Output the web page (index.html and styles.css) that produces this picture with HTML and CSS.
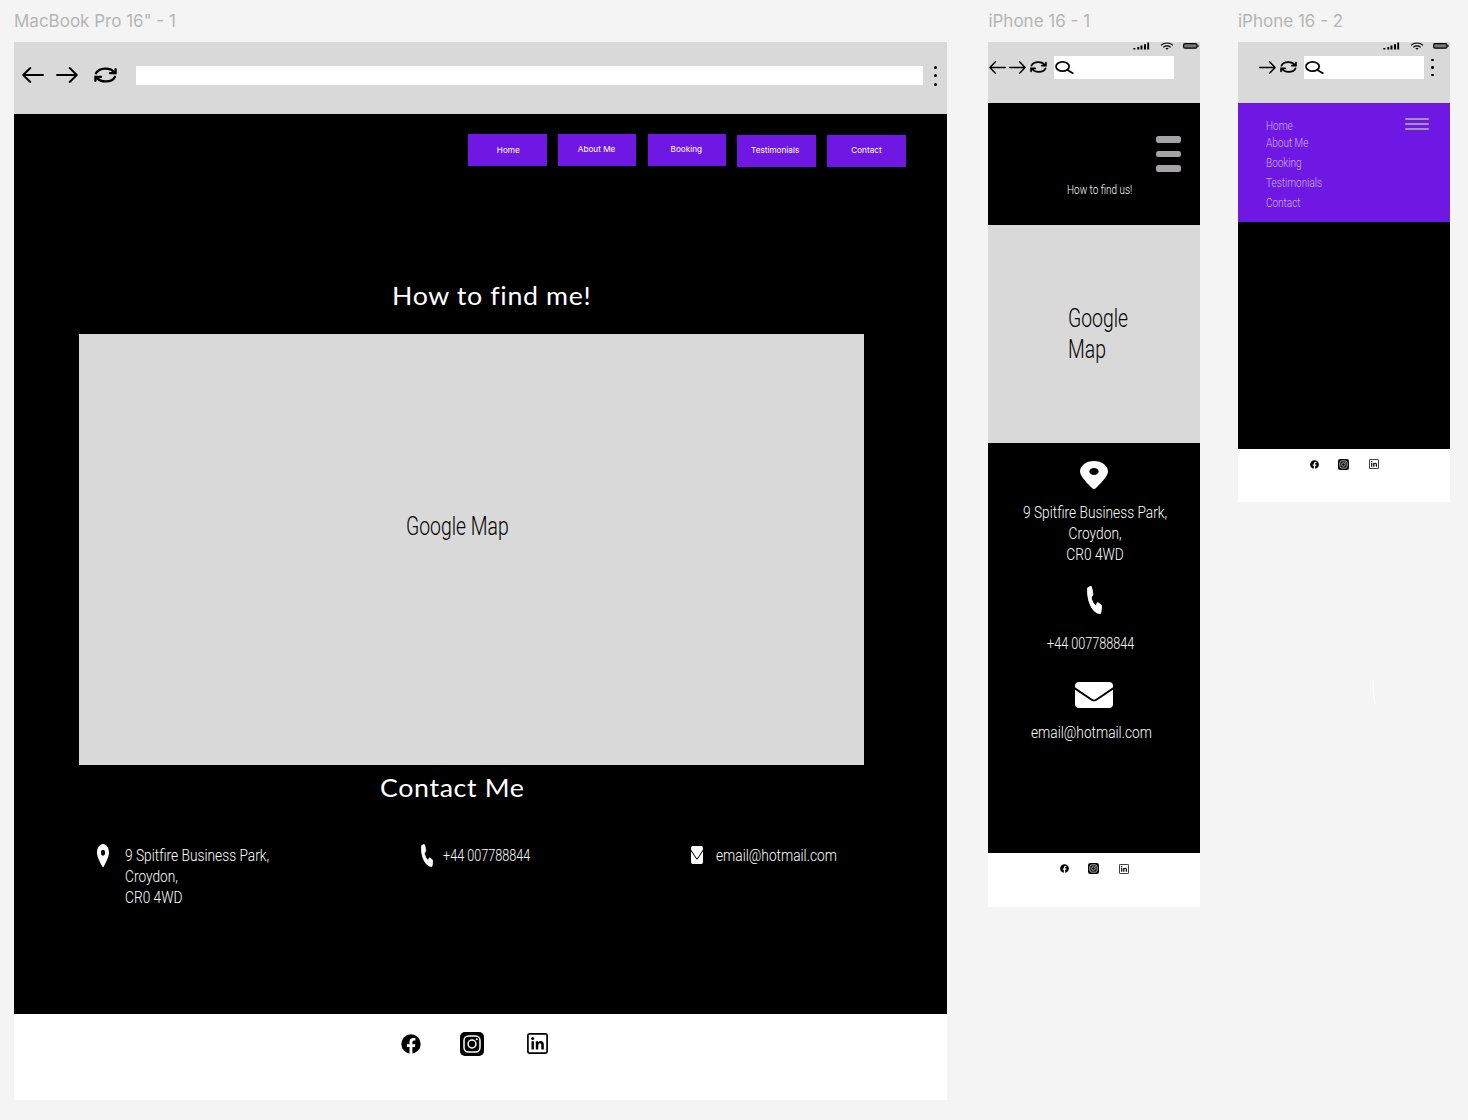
FILE: index.html
```html
<!DOCTYPE html>
<html lang="en">
<head>
<meta charset="utf-8">
<title>Contact page wireframes</title>
<link rel="stylesheet" href="styles.css">
</head>
<body>
<svg class="defs" aria-hidden="true">
  <symbol id="back" viewBox="0 0 22 16" preserveAspectRatio="none"><path d="M21 8H1.2M8.3 1 1.2 8l7.1 7" fill="none" stroke="#000" stroke-width="1.9" stroke-linecap="round" stroke-linejoin="round"/></symbol>
  <symbol id="forward" viewBox="0 0 22 16" preserveAspectRatio="none"><path d="M1 8h19.8M13.7 1l7.1 7-7.1 7" fill="none" stroke="#000" stroke-width="1.9" stroke-linecap="round" stroke-linejoin="round"/></symbol>
  <symbol id="reload" viewBox="0 0 23 16" preserveAspectRatio="none"><path d="M2 6.3C5 .2 16.5 0 20.3 5.5M21.6 2.2v3.900h-5.600M21 9.700C18 15.800 6.500 16 2.700 10.500M1.400 13.800V9.900h5.600" fill="none" stroke="#000" stroke-width="2.300" stroke-linecap="round" stroke-linejoin="miter"/></symbol>
  <symbol id="search" viewBox="0 0 19 13" preserveAspectRatio="none"><ellipse cx="7.600" cy="5.500" rx="6.600" ry="4.600" fill="none" stroke="#000" stroke-width="1.700"/><path d="m12.500 9 5.300 3.200" stroke="#000" stroke-width="1.700" stroke-linecap="round"/></symbol>
  <symbol id="signal" viewBox="0 0 17 8"><path d="M.3 6h2v1.500h-2zM4.300 5h2v2.500h-2zM7.500 3.600h2v3.900h-2zM11 2.200h2v5.300h-2zM14.300.5h1.800v7h-1.800z"/></symbol>
  <symbol id="wifi" viewBox="0 0 14 8"><path d="M1 3.200Q7-1.200 13 3.200M3.300 5.200q3.700-2.700 7.400 0" fill="none" stroke="#000" stroke-width="1.100"/><path d="M5.300 6.200Q7 5.200 8.700 6.200L7 7.700z"/></symbol>
  <symbol id="battery" viewBox="0 0 16 6"><rect x=".6" y=".7" width="13.400" height="4.500" rx="1.500" fill="#777" stroke="#000" stroke-width="1.200"/><path d="M14.500 1.800h1v2.300h-1z"/></symbol>
  <symbol id="pin" viewBox="0 0 384 512" preserveAspectRatio="none"><path fill="#fff" d="M215.700 499.200C267 435 384 279.400 384 192C384 86 298 0 192 0S0 86 0 192c0 87.400 117 243 168.300 307.200c12.300 15.300 35.100 15.300 47.400 0zM192 128a64 64 0 1 1 0 128 64 64 0 1 1 0-128z"/></symbol>
  <symbol id="phone" viewBox="0 0 512 512" preserveAspectRatio="none"><path fill="#fff" stroke="#fff" stroke-width="22" stroke-linejoin="round" d="M160 28c-7.700-18.600-24-22-43-17l-88 24C16 38 11 50 11 64C11 305 206 501 448 501c14 0 27-9 30-22l22-88c5-16-4-34-19-40l-96-40c-16-6.800-35-2-46 11.600L304.700 368C234.300 344 167 270 144 207.300L190 167c13.700-11.200 15-30 9-46z"/></symbol>
  <symbol id="mail" viewBox="0 0 38 26" preserveAspectRatio="none"><path fill="#fff" d="M4 0h30q4 0 4 4v1.200L20.800 17q-1.800 1-3.600 0L0 5.200V4q0-4 4-4zM0 7.700l16.600 11q2.400 1.300 4.800 0L38 7.700V22q0 4-4 4H4q-4 0-4-4z"/></symbol>
  <symbol id="facebook" viewBox="0 0 20 20"><circle cx="10" cy="10" r="9.700"/><path fill="#fff" d="M8.500 20v-7H6v-2.800h2.500V8q0-4 3.800-4h2.100v2.500H13q-1.600 0-1.600 1.600v2.100h2.900l-.5 2.800h-2.400v7z"/></symbol>
  <symbol id="instagram" viewBox="0 0 24 24"><rect width="24" height="24" rx="5"/><g fill="none" stroke="#fff" stroke-width="1.500"><rect x="4" y="4" width="16" height="16" rx="4.500"/><circle cx="12" cy="12" r="3.900"/></g><circle cx="16.800" cy="7.200" r="1" fill="#fff"/></symbol>
  <symbol id="linkedin" viewBox="0 0 21 21"><rect x=".9" y=".9" width="19.200" height="19.200" rx="1.500" fill="none" stroke="#000" stroke-width="1.700"/><circle cx="5.700" cy="5.600" r="1.500"/><path d="M4.500 8.300h2.400v8.200H4.500zM8.800 8.300h2.300v1.200q.9-1.400 2.600-1.400 3.100 0 3.100 3.600v4.800h-2.500V12q0-1.800-1.300-1.800-1.700 0-1.700 2v4.300H8.800z"/></symbol>
</svg>

<main class="canvas">
  <section class="artboard desktop">
    <h2 class="label">MacBook Pro 16" - 1</h2>
    <header class="browser">
      <svg class="arrow"><use href="#back"/></svg>
      <svg class="arrow next"><use href="#forward"/></svg>
      <svg class="reload"><use href="#reload"/></svg>
      <div class="address"></div>
      <div class="dots"><i></i><i></i><i></i></div>
    </header>
    <div class="page">
      <nav class="nav">
        <a>Home</a><a class="up">About Me</a><a class="up">Booking</a><a class="low">Testimonials</a><a class="low">Contact</a>
      </nav>
      <h1 class="title"><span>How to find me!</span></h1>
      <div class="map"><span class="thin narrow">Google Map</span></div>
      <h1 class="title contact-title"><span>Contact Me</span></h1>
      <div class="contacts">
        <svg class="pin"><use href="#pin"/></svg>
        <address><span class="thin wide">9 Spitfire Business Park,<br>Croydon,<br>CR0 4WD</span></address>
        <svg class="phone"><use href="#phone"/></svg>
        <p class="tel"><span class="thin narrow">+44 007788844</span></p>
        <svg class="mail"><use href="#mail"/></svg>
        <p><span class="thin wide">email@hotmail.com</span></p>
      </div>
    </div>
    <footer class="social">
      <svg class="fb"><use href="#facebook"/></svg>
      <svg class="ig"><use href="#instagram"/></svg>
      <svg class="li"><use href="#linkedin"/></svg>
    </footer>
  </section>

  <section class="artboard mobile">
    <h2 class="label">iPhone 16 - 1</h2>
    <header class="phone-bar">
      <div class="status"><svg class="sig"><use href="#signal"/></svg><svg class="wifi"><use href="#wifi"/></svg><svg class="bat"><use href="#battery"/></svg></div>
      <div class="tools">
        <svg class="arrow"><use href="#back"/></svg>
        <svg class="arrow next"><use href="#forward"/></svg>
        <svg class="reload"><use href="#reload"/></svg>
        <div class="address"><svg><use href="#search"/></svg></div>
      </div>
    </header>
    <div class="intro">
      <div class="burger"><i></i><i></i><i></i></div>
      <p><span class="thin narrow">How to find us!</span></p>
    </div>
    <div class="map"><span class="thin narrow">Google<br>Map</span></div>
    <div class="details">
      <svg class="pin"><use href="#pin"/></svg>
      <address><span class="thin wide">9 Spitfire Business Park,<br>Croydon,<br>CR0 4WD</span></address>
      <svg class="phone"><use href="#phone"/></svg>
      <p class="tel"><span class="thin narrow">+44 007788844</span></p>
      <svg class="mail"><use href="#mail"/></svg>
      <p class="email"><span class="thin wide">email@hotmail.com</span></p>
    </div>
    <footer class="social">
      <svg class="fb"><use href="#facebook"/></svg>
      <svg class="ig"><use href="#instagram"/></svg>
      <svg class="li"><use href="#linkedin"/></svg>
    </footer>
  </section>

  <section class="artboard mobile second">
    <h2 class="label">iPhone 16 - 2</h2>
    <header class="phone-bar">
      <div class="status"><svg class="sig"><use href="#signal"/></svg><svg class="wifi"><use href="#wifi"/></svg><svg class="bat"><use href="#battery"/></svg></div>
      <div class="tools">
        <svg class="arrow next only"><use href="#forward"/></svg>
        <svg class="reload"><use href="#reload"/></svg>
        <div class="address"><svg><use href="#search"/></svg></div>
        <div class="dots"><i></i><i></i><i></i></div>
      </div>
    </header>
    <div class="menu">
      <ul>
        <li><span class="thin">Home</span></li>
        <li><span class="thin">About Me</span></li>
        <li><span class="thin">Booking</span></li>
        <li><span class="thin">Testimonials</span></li>
        <li><span class="thin">Contact</span></li>
      </ul>
      <div class="burger"><i></i><i></i><i></i></div>
    </div>
    <div class="blank"></div>
    <footer class="social">
      <svg class="fb"><use href="#facebook"/></svg>
      <svg class="ig"><use href="#instagram"/></svg>
      <svg class="li"><use href="#linkedin"/></svg>
    </footer>
    <svg class="stroke" viewBox="0 0 4 26"><path d="M1 1q.3 12 2 24" fill="none" stroke="#fff" stroke-width="1.300"/></svg>
  </section>
</main>
</body>
</html>
```
FILE: styles.css
```css
* { box-sizing: border-box; }
body { margin: 0; background: #f4f4f4; font-family: Inter, sans-serif; overflow: hidden; }
h1, h2, p, ul { margin: 0; padding: 0; font-weight: 400; list-style: none; }
address { font-style: normal; }
svg { display: block; flex: none; }
.defs { position: absolute; width: 0; height: 0; }

.canvas { display: flex; align-items: flex-start; height: 1120px; padding-left: 14px; }
.artboard { flex: none; }
.desktop { width: 933.4px; margin-right: 41px; }
.mobile { width: 212px; margin-right: 37.6px; }
.label { height: 42px; padding-top: 11px; font-size: 17px; line-height: 20px; color: #b5b5b5; white-space: nowrap; }
.title span, .thin { display: inline-block; white-space: nowrap; transform-origin: 0 0; }
.thin { font-family: Roboto, sans-serif; font-weight: 300; transform: scaleX(.8); }
.narrow { transform: scaleX(.766); }
.wide { transform: scaleX(.832); }

.browser { display: flex; align-items: flex-start; height: 72.400px; padding: 23.700px 0 0 8px; background: #d9d9d9; }
.browser .arrow { width: 22px; height: 16px; margin-top: 1.300px; }
.browser .next { margin-left: 12px; }
.browser .reload { width: 23px; height: 16px; margin: 1px 0 0 16px; }
.browser .address { width: 786.500px; height: 19px; margin-left: 19px; background: #fff; }
.dots { display: flex; flex-direction: column; justify-content: space-between; }
.dots i { width: 3px; height: 3px; border-radius: 50%; background: #000; }
.browser .dots { height: 20px; margin: 0 0 0 11px; }

.desktop .page { height: 900px; background: #000; color: #fff; }
.nav { display: flex; gap: 11.200px; height: 165px; padding: 20px 0 0 454px; }
.nav a { width: 78.600px; height: 31.500px; font-size: 8.200px; line-height: 32px; padding-left: 2px; text-align: center; background: #7018e3; }
.nav .up { line-height: 31px; padding: 0 1px 0 0; }
.nav .low { margin-top: .7px; padding: 0 3px 0 0; line-height: 31px; }
.nav .low:last-child { padding: 0; }
.title { height: 55px; padding-left: 378px; font: 400 25px/32px Lato, sans-serif; letter-spacing: .6px; font-variant-ligatures: none; }
.title span { transform: scaleX(1.07); }
.desktop .map { width: 785px; height: 430.500px; margin-left: 65px; padding: 176px 0 0 327px; background: #d9d9d9; color: #000; font-size: 25.300px; line-height: 31.500px; }
.contact-title { height: 80px; padding: 6.500px 0 0 366px; }
.contacts { display: flex; align-items: flex-start; padding-left: 83px; font-size: 16.500px; line-height: 21px; }
.contacts address { width: 296px; margin-left: 16px; }
.contacts .pin { width: 12px; height: 23px; margin-top: -1px; }
.contacts .phone { width: 12px; height: 23px; margin-top: -1px; }
.contacts .tel { width: 248px; margin-left: 10px; }
.contacts .mail { width: 12px; height: 18px; margin: 1px 12.500px 0 0; }
.social { display: flex; align-items: center; background: #fff; }
.desktop .social { height: 86px; padding: 0 0 27px 387px; }
.desktop .fb { width: 20px; height: 20px; }
.desktop .ig { width: 24px; height: 24px; margin-left: 39px; }
.desktop .li { width: 21px; height: 21px; margin-left: 43px; }

.phone-bar { height: 61px; background: #d9d9d9; }
.status { display: flex; height: 14px; padding-left: 145px; }
.sig { width: 17px; height: 8px; }
.wifi { width: 14px; height: 8px; margin-left: 10px; }
.bat { width: 16px; height: 6px; margin: 1px 0 0 9px; }
.tools { display: flex; align-items: center; height: 23px; padding-left: 1px; }
.tools .arrow { width: 17px; height: 13px; }
.tools .next { margin-left: 2.500px; }
.tools .only { margin-left: 20px; }
.tools .reload { width: 17px; height: 12px; margin: -1px 0 0 4.500px; }
.tools .address { width: 119.500px; height: 23px; margin-left: 7px; padding: 5px 0 0 .5px; background: #fff; }
.tools .address svg { width: 19px; height: 13px; }
.tools .dots { height: 17px; margin-left: 7.500px; }
.tools .dots i { width: 2.400px; height: 2.400px; }
.intro { height: 122px; padding-top: 33px; background: #000; color: #fff; }
.burger { display: flex; flex-direction: column; justify-content: space-between; }
.intro .burger { width: 25px; height: 35.500px; margin-left: 167.500px; }
.intro .burger i { height: 6.500px; border-radius: 2.500px; background: #a5a3a6; }
.intro p { padding: 9px 0 0 79px; font-size: 13px; line-height: 16px; }
.mobile .map { height: 218px; padding: 77.500px 0 0 79.500px; background: #d9d9d9; font-size: 25.300px; line-height: 31.500px; }
.details { display: flex; flex-direction: column; height: 410px; padding-top: 18px; background: #000; color: #fff; font-size: 16.500px; line-height: 21px; }
.details .pin { width: 28px; height: 28px; margin-left: 91.500px; }
.details address { margin: 13px 0 21px 34.500px; text-align: center; width: 144px; }
.details .phone { width: 15px; height: 28px; margin-left: 98.500px; }
.details .tel { margin: 19px 0 27.500px 59px; }
.details .mail { width: 38px; height: 26px; margin-left: 86.500px; }
.details .email { margin: 14px 0 0 43px; }
.mobile .social { height: 53.500px; padding: 0 0 22px 72px; }
.mobile .fb { width: 9px; height: 9px; }
.mobile .ig { width: 11px; height: 11px; margin-left: 19px; }
.mobile .li { width: 10px; height: 10px; margin-left: 20px; }

.menu { display: flex; height: 118.500px; background: #7018e3; color: #c9b4f3; }
.menu ul { width: 167px; padding: 13px 0 0 28.500px; font-size: 12.500px; line-height: 20px; }
.menu li { height: 20px; }
.menu li:first-child { height: 17px; }
.menu .burger { width: 24px; height: 12px; margin-top: 15px; }
.menu .burger i { height: 2px; border-radius: 1px; background: #a295b4; }
.blank { height: 227px; background: #000; }
.stroke { width: 4px; height: 26px; margin: 177px 0 0 134px; }
```
